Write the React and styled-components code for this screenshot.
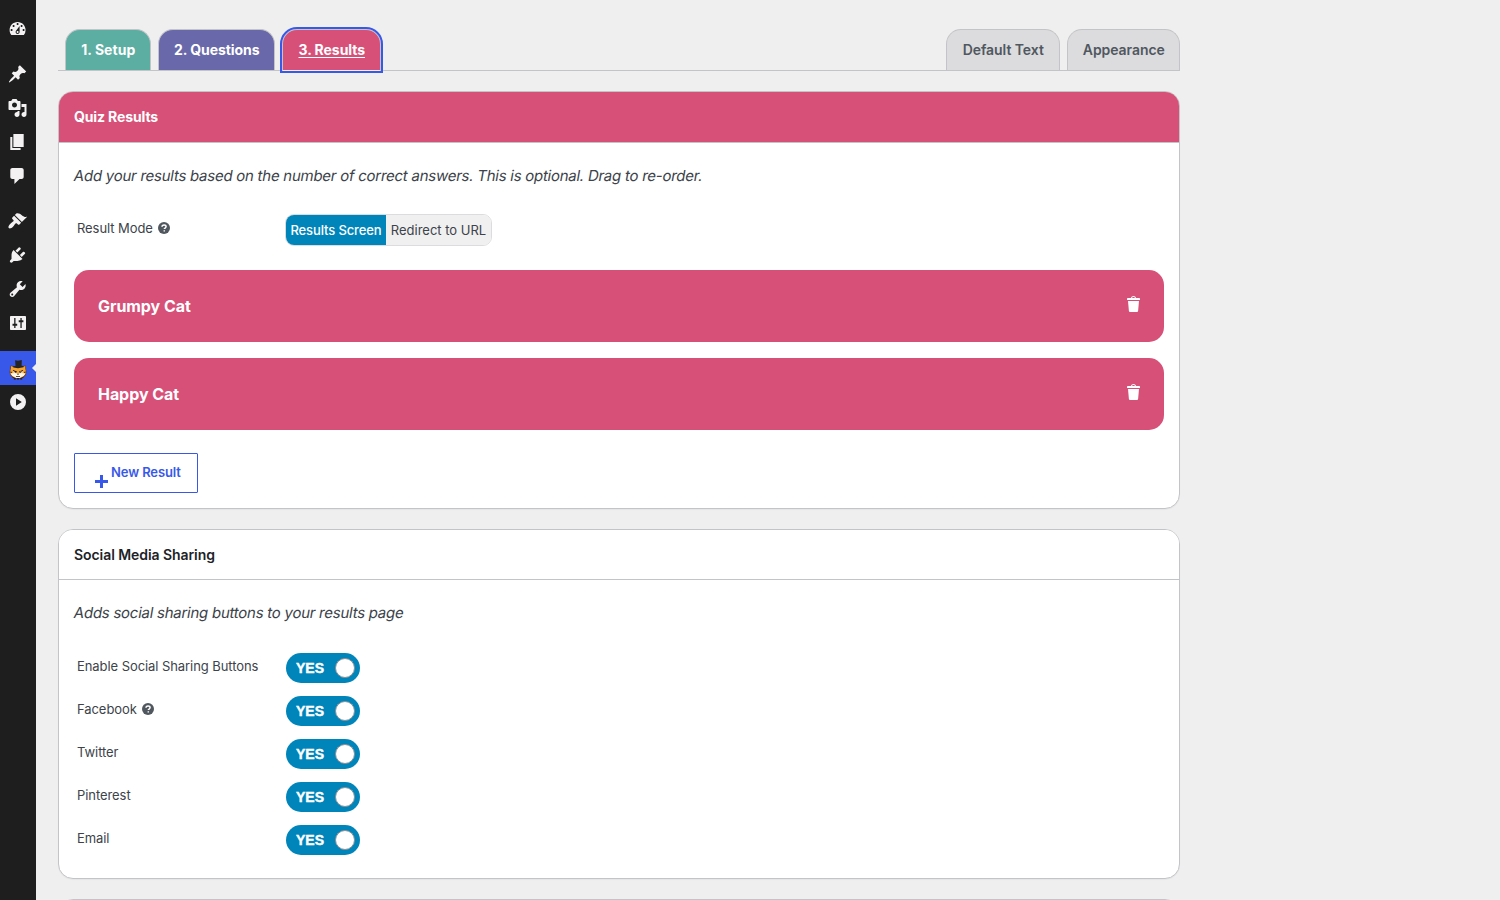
import React from "react";
import styled, { createGlobalStyle } from "styled-components";

const GlobalStyle = createGlobalStyle`
  *, *::before, *::after { box-sizing: border-box; }
  html, body { margin: 0; padding: 0; height: 100%; overflow: hidden; }
  body {
    background: #efefef;
    color: #3c434a;
    font-family: Inter, "Liberation Sans", sans-serif;
    font-size: 13px;
    -webkit-font-smoothing: antialiased;
  }
  button { font: inherit; margin: 0; cursor: pointer; }
`;

const Page = styled.div`
  display: flex;
  width: 1500px;
  height: 900px;
  overflow: hidden;
`;

const Sidebar = styled.nav`
  flex: none;
  width: 36px;
  padding-top: 12px;
  background: #1e1e1e;
  display: flex;
  flex-direction: column;
`;

const MenuItem = styled.a`
  position: relative;
  display: flex;
  align-items: center;
  justify-content: center;
  height: 34px;
  margin-top: ${(p) => (p.$gap ? 11 : 0)}px;
  background: ${(p) => (p.$active ? "#3858e9" : "transparent")};
  color: #f3f1f1;
`;

const ActiveArrow = styled.span`
  position: absolute;
  right: 0;
  top: 13px;
  border: 4px solid transparent;
  border-left-width: 0;
  border-right-color: #efefef;
`;

const Glyph = styled.svg`
  display: block;
  flex: none;
  width: ${(p) => p.$size || 20}px;
  height: ${(p) => p.$size || 20}px;
  fill: currentColor;
  overflow: visible;
`;

const Content = styled.main`
  width: 1122px;
  margin-left: 22px;
  padding-top: 29px;
  display: flex;
  flex-direction: column;
`;

const TabBar = styled.div`
  display: flex;
  flex: none;
  height: 42px;
  padding-left: 7px;
  border-bottom: 1px solid #c3c4c7;
  margin-bottom: 20px;
`;

const Tab = styled.a`
  width: ${(p) => p.$width}px;
  height: ${(p) => (p.$focused ? 42 : 41)}px;
  margin-right: ${(p) => p.$after ?? 7}px;
  border: 1px solid #c3c4c7;
  border-bottom: ${(p) => (p.$focused ? "1px solid #efefef" : "0")};
  border-radius: 15px 15px 0 0;
  background: ${(p) => p.$bg};
  color: ${(p) => p.$color || "#fff"};
  font-size: 14px;
  font-weight: ${(p) => p.$weight || 700};
  line-height: 40px;
  text-align: center;
  white-space: nowrap;
  letter-spacing: ${(p) => p.$track ?? -0.06}px;
  text-indent: 0.5px;
  text-decoration: ${(p) => (p.$focused ? "underline" : "none")};
  text-underline-offset: 2px;
  outline: ${(p) => (p.$focused ? "2px solid #3858e9" : "none")};
`;

const Spacer = styled.div`
  flex: 1;
`;

const Card = styled.section`
  flex: none;
  height: ${(p) => p.$height}px;
  margin-bottom: 20px;
  background: #fff;
  border: 1px solid #c3c4c7;
  border-radius: 15px;
  box-shadow: 0 1px 1px rgba(0, 0, 0, 0.04);
  overflow: hidden;
`;

const CardTitle = styled.h2`
  margin: 0;
  height: ${(p) => (p.$accent ? 51 : 50)}px;
  padding: 0 15px;
  line-height: 49px;
  border-bottom: 1px solid #c3c4c7;
  background: ${(p) => (p.$accent ? "#d75078" : "#fff")};
  color: ${(p) => (p.$accent ? "#fff" : "#1d2327")};
  font-size: 14px;
  font-weight: ${(p) => (p.$accent ? 700 : 600)};
  letter-spacing: ${(p) => (p.$accent ? -0.12 : -0.07)}px;
`;

const CardBody = styled.div`
  padding: 0 15px;
`;

const Description = styled.p`
  margin: 0;
  padding-top: 21px;
  height: ${(p) => p.$height}px;
  font-size: 15px;
  line-height: 24px;
  letter-spacing: -0.255px;

  span {
    display: inline-block;
    transform: skewX(-10deg);
    transform-origin: 0 50%;
    white-space: nowrap;
  }
`;

const Field = styled.div`
  display: flex;
  align-items: flex-start;
  height: ${(p) => p.$height || 43}px;
`;

const FieldLabel = styled.label`
  display: flex;
  align-items: center;
  width: 212px;
  height: 20px;
  margin-top: ${(p) => p.$top ?? 3}px;
  padding-left: 3px;
  gap: 4.5px;
  letter-spacing: -0.07px;
`;

const HelpIcon = styled(Glyph)`
  color: #50575e;
`;

const Segmented = styled.div`
  display: flex;
  width: 207px;
  height: 32px;
  margin-left: -1px;
  border: 1px solid #dcdcde;
  border-radius: 9px;
  overflow: hidden;
`;

const Segment = styled.button`
  width: ${(p) => p.$width}px;
  flex: none;
  padding: 0;
  border: 0;
  background: ${(p) => (p.$on ? "#0085ba" : "#f0f0f0")};
  color: ${(p) => (p.$on ? "#fff" : "#3c434a")};
  font-weight: ${(p) => (p.$on ? 500 : 400)};
  letter-spacing: ${(p) => p.$track}px;
  white-space: nowrap;
`;

const ResultBar = styled.div`
  display: flex;
  align-items: center;
  justify-content: space-between;
  height: 72px;
  margin-bottom: 16px;
  padding: 0 20px 0 24px;
  border-radius: 15px;
  background: #d75078;
  color: #fff;
  font-size: 16px;
  font-weight: 700;
  letter-spacing: -0.06px;

  svg { margin-bottom: 4px; }
`;

const NewResult = styled.button`
  display: flex;
  align-items: center;
  width: 124px;
  height: 40px;
  margin-top: 23px;
  padding: 0 0 2px 20px;
  gap: 3px;
  border: 1px solid #3858e9;
  border-radius: 1px;
  background: #fff;
  color: #3858e9;
  font-weight: 600;
  letter-spacing: -0.1px;
  white-space: nowrap;

  svg { margin-top: 19px; }
`;

const Switch = styled.div`
  display: flex;
  align-items: center;
  justify-content: space-between;
  width: 74px;
  height: 30px;
  padding: 0 5px 0 10px;
  border-radius: 15px;
  background: #0085ba;
  color: #fff;
  font-family: "Liberation Sans", Arial, sans-serif;
  font-size: 14px;
  font-weight: 700;
  -webkit-text-stroke: 0.4px #fff;
`;

const Knob = styled.span`
  width: 20px;
  height: 20px;
  border: 1px solid #8c8f94;
  border-radius: 50%;
  background: #fff;
`;

const icons = {
  dashboard: (
    <path transform="translate(-.4 0)" fillRule="evenodd" d="M3.76 16h12.48A7.98 7.98 0 0 0 18 11c0-4.42-3.58-8-8-8s-8 3.58-8 8c0 1.89.66 3.63 1.76 5zM10 4c.55 0 1 .45 1 1s-.45 1-1 1-1-.45-1-1 .45-1 1-1zM6 6c.55 0 1 .45 1 1s-.45 1-1 1-1-.45-1-1 .45-1 1-1zm8 0c.55 0 1 .45 1 1s-.45 1-1 1-1-.45-1-1 .45-1 1-1zm-5.37 5.55L12 7v6c0 1.1-.9 2-2 2s-2-.9-2-2c0-.57.24-1.08.63-1.45zM4 10c.55 0 1 .45 1 1s-.45 1-1 1-1-.45-1-1 .45-1 1-1zm12 0c.55 0 1 .45 1 1s-.45 1-1 1-1-.45-1-1 .45-1 1-1zm-5 3c0-.55-.45-1-1-1s-1 .45-1 1 .45 1 1 1 1-.45 1-1z" />
  ),
  post: (
    <path transform="translate(-.4 0)" d="M10.44 3.02l1.82-1.82 6.36 6.35-1.83 1.82c-1.05-.68-2.48-.57-3.41.36l-.75.75c-.92.93-1.04 2.35-.35 3.41l-1.83 1.82-2.41-2.41-2.8 2.79c-.42.42-3.38 2.71-3.8 2.29s1.86-3.39 2.28-3.81l2.79-2.79L4.1 9.36l1.83-1.82c1.05.69 2.48.57 3.4-.36l.75-.75c.93-.92 1.05-2.35.36-3.41z" />
  ),
  media: (
    <path transform="translate(-.5 0)" fillRule="evenodd" d="M13 11V4c0-.55-.45-1-1-1h-1.67L9 1H5L3.67 3H2c-.55 0-1 .45-1 1v7c0 .55.45 1 1 1h10c.55 0 1-.45 1-1zM7 4.5c1.38 0 2.5 1.12 2.5 2.5S8.38 9.5 7 9.5 4.5 8.38 4.5 7 5.62 4.5 7 4.5zM14 6h5v10.5c0 1.38-1.12 2.5-2.5 2.5S14 17.88 14 16.5s1.12-2.5 2.5-2.5c.17 0 .34.02.5.05V9h-3V6zm-4 8.05V13h2v3.5c0 1.38-1.12 2.5-2.5 2.5S7 17.88 7 16.5 8.12 14 9.5 14c.17 0 .34.02.5.05z" />
  ),
  pages: <path transform="translate(-.8 0) scale(1.03 1)" d="M6 15V2h10v13H6zm-1 1h8v2H3V5h2v11z" />,
  comments: (
    <path transform="translate(-.8 0) scale(1.03 1)" d="M5 2h9c1.1 0 2 .9 2 2v7c0 1.1-.9 2-2 2h-2l-5 5v-5H5c-1.1 0-2-.9-2-2V4c0-1.1.9-2 2-2z" />
  ),
  appearance: (
    <path transform="translate(-.6 0)" d="M14.48 11.06L7.41 3.99l1.5-1.5c.5-.56 2.3-.47 3.51.32 1.21.8 1.43 1.28 2.91 2.1 1.18.64 2.45 1.26 4.45.85zm-.71.71L6.7 4.7 4.93 6.47c-.39.39-.39 1.02 0 1.41l1.06 1.06c.39.39.39 1.03 0 1.42-.6.6-1.43 1.11-2.21 1.69-.35.26-.7.53-1.01.84C1.43 14.23.4 16.08 1.4 17.07c.99 1 2.84-.03 4.18-1.36.31-.31.58-.66.85-1.02.57-.78 1.08-1.61 1.69-2.21.39-.39 1.02-.39 1.41 0l1.06 1.06c.39.39 1.02.39 1.41 0z" />
  ),
  plugins: (
    <path transform="translate(-.5 0)" d="M13.11 4.36L9.87 7.6 8 5.73l3.24-3.24c.35-.34 1.05-.2 1.56.32.52.51.66 1.21.31 1.55zm-8 1.77l.91-1.12 9.01 9.01-1.19.84c-.71.71-2.63 1.16-3.82 1.16H6.14L4.9 17.26c-.59.59-1.54.59-2.12 0-.59-.58-.59-1.53 0-2.12l1.24-1.24v-3.88c0-1.13.4-3.19 1.09-3.89zm7.26 3.97l3.24-3.24c.34-.35 1.04-.21 1.55.31.52.51.66 1.21.31 1.55l-3.24 3.25z" />
  ),
  tools: (
    <path transform="translate(-.3 0)" fillRule="evenodd" d="M16.68 9.77c-1.34 1.34-3.3 1.67-4.95.99l-5.41 6.52c-.99.99-2.59.99-3.58 0s-.99-2.59 0-3.57l6.52-5.42c-.68-1.65-.35-3.61.99-4.95 1.28-1.28 3.12-1.62 4.72-1.06l-2.89 2.89 2.82 2.82 2.86-2.87c.53 1.58.18 3.39-1.08 4.65zM3.81 16.21c.4.39 1.04.39 1.43 0 .4-.4.4-1.04 0-1.43-.39-.4-1.03-.4-1.43 0-.39.39-.39 1.03 0 1.43z" />
  ),
  settings: (
    <path fillRule="evenodd" d="M3 3h14c.55 0 1 .45 1 1v12c0 .55-.45 1-1 1H3c-.55 0-1-.45-1-1V4c0-.55.45-1 1-1zM6.200 5v5.800H4.500v2h1.700V15h1.300v-2.200h1.700v-2H7.500V5H6.200zm6.200 0v2.200h-1.700v2h1.700V15h1.300V9.200h1.700v-2h-1.700V5H12.400z" />
  ),
  play: (
    <path fillRule="evenodd" d="M10 2a8 8 0 1 1 0 16 8 8 0 0 1 0-16zM8 6.300v7.400l5.800-3.700L8 6.300z" />
  ),
  trash: (
    <path fillRule="evenodd" d="M12 4h3c.6 0 1 .4 1 1v1H3V5c0-.6.5-1 1-1h3c.2-1.1 1.3-2 2.5-2s2.3.9 2.5 2zM8 4h3c-.2-.6-.9-1-1.500-1S8.200 3.400 8 4zM4 7h11l-.9 10.100c0 .5-.5.9-1 .9H5.900c-.5 0-.9-.4-1-.9L4 7z" />
  ),
};

const Icon = ({ name }) => <Glyph viewBox="0 0 20 20">{icons[name]}</Glyph>;

const TigerLogo = () => (
  <Glyph viewBox="0 0 20 20">
    <path d="M2.500 7.500 5 8h10l2.700-.5v3l.8 3.500-.8 3-2 2.300-2 1.200H6.300l-2-1.200-2-2.300-.8-3 1-3.500z" fill="#6b3d10" />
    <path d="M3 8l2.300.9h9.400L17.200 8v2.600l.8 3.200-.8 2.700-2 2-2 1.100H6.800l-2-1.100-2-2L2 13.800l1-3.200z" fill="#f7a32f" />
    <path d="M2.600 15.500 6.500 15l3.500.6 3.500-.6 3.900.5-1.800 2.500-2.400 1L12 20H8l-1.200-1-2.400-1z" fill="#fff7e8" />
    <path d="M5 12.700 8.800 14l-1.400 1.200-1.800-.5zM15 12.700 11.200 14l1.400 1.200 1.800-.5z" fill="#fff" />
    <path d="M5 11.900 9 13.500l-.4.9-3.600-1.500zM15 11.900 11 13.500l.4.9 3.600-1.500zM6.700 13.500h1.200v1.200H6.700zM12.100 13.500h1.200v1.200h-1.200zM8.800 15.700h2.400L10 17zM8 18.300h4v.8H8zM2.300 13.600l1.700.4v.8l-1.700-.3zM17.700 13.600l-1.700.4v.8l1.700-.3zM3.800 18.400l2 1-.3.8zM16.200 18.400l-2 1 .3.800zM5.800 20.300h2v1.200h-2zM8.800 20.300h2.400v1.200H8.800zM12.200 20.300h2v1.200h-2z" fill="#241507" />
    <path d="M5.300 8.300 7.500 8 7.100 2.300 10 2.700l3.800-.7-.2 5.800 1.900.2v1.300L10 10.200 5.300 9.600z" fill="#242424" />
  </Glyph>
);

const Help = () => (
  <HelpIcon viewBox="0 0 14 14" $size={14}>
    <circle cx="7" cy="7" r="6" />
    <path d="M5 5.700C5 4.500 5.900 3.900 7.100 3.900s2 .7 2 1.700c0 1.400-1.800 1.400-1.800 2.500M7.300 9.200v1.400" fill="none" stroke="#fff" strokeWidth="1.500" />
  </HelpIcon>
);

const menu = [
  ["dashboard"],
  ["post", true],
  ["media"],
  ["pages"],
  ["comments"],
  ["appearance", true],
  ["plugins"],
  ["tools"],
  ["settings"],
];

const shares = [
  { label: "Enable Social Sharing Buttons" },
  { label: "Facebook", help: true },
  { label: "Twitter" },
  { label: "Pinterest" },
  { label: "Email" },
];

export default function App() {
  return (
    <>
      <GlobalStyle />
      <Page>
        <Sidebar>
          {menu.map(([name, gap]) => (
            <MenuItem key={name} $gap={gap}>
              <Icon name={name} />
            </MenuItem>
          ))}
          <MenuItem $gap $active>
            <TigerLogo />
            <ActiveArrow />
          </MenuItem>
          <MenuItem>
            <Icon name="play" />
          </MenuItem>
        </Sidebar>
        <Content>
          <TabBar>
            <Tab $width={86} $bg="#5baea1" $track={0.03}>1. Setup</Tab>
            <Tab $width={117} $bg="#6968aa">2. Questions</Tab>
            <Tab $width={99} $bg="#d75078" $focused>3. Results</Tab>
            <Spacer />
            <Tab $width={114} $bg="#dcdcde" $color="#50575e" $weight={600}>Default Text</Tab>
            <Tab $width={113} $bg="#dcdcde" $color="#50575e" $weight={600} $after={0}>Appearance</Tab>
          </TabBar>

          <Card $height={418}>
            <CardTitle $accent>Quiz Results</CardTitle>
            <CardBody>
              <Description $height={71}>
                <span>Add your results based on the number of correct answers. This is optional. Drag to re-order.</span>
              </Description>
              <Field $height={56}>
                <FieldLabel $top={4}>
                  <span>Result Mode</span>
                  <Help />
                </FieldLabel>
                <Segmented>
                  <Segment $on $width={100} $track={-0.12}>Results Screen</Segment>
                  <Segment $width={105} $track={0}>Redirect to URL</Segment>
                </Segmented>
              </Field>
              <ResultBar>
                <span>Grumpy Cat</span>
                <Icon name="trash" />
              </ResultBar>
              <ResultBar>
                <span>Happy Cat</span>
                <Icon name="trash" />
              </ResultBar>
              <NewResult>
                <Glyph viewBox="0 0 13 13" $size={13}>
                  <path d="M5 0h3v5h5v3H8v5H5V8H0V5h5z" />
                </Glyph>
                <span>New Result</span>
              </NewResult>
            </CardBody>
          </Card>

          <Card $height={350}>
            <CardTitle>Social Media Sharing</CardTitle>
            <CardBody>
              <Description $height={73}>
                <span>Adds social sharing buttons to your results page</span>
              </Description>
              {shares.map((s) => (
                <Field key={s.label}>
                  <FieldLabel>
                    <span>{s.label}</span>
                    {s.help && <Help />}
                  </FieldLabel>
                  <Switch>
                    <span>YES</span>
                    <Knob />
                  </Switch>
                </Field>
              ))}
            </CardBody>
          </Card>

          <Card $height={200} />
        </Content>
      </Page>
    </>
  );
}
